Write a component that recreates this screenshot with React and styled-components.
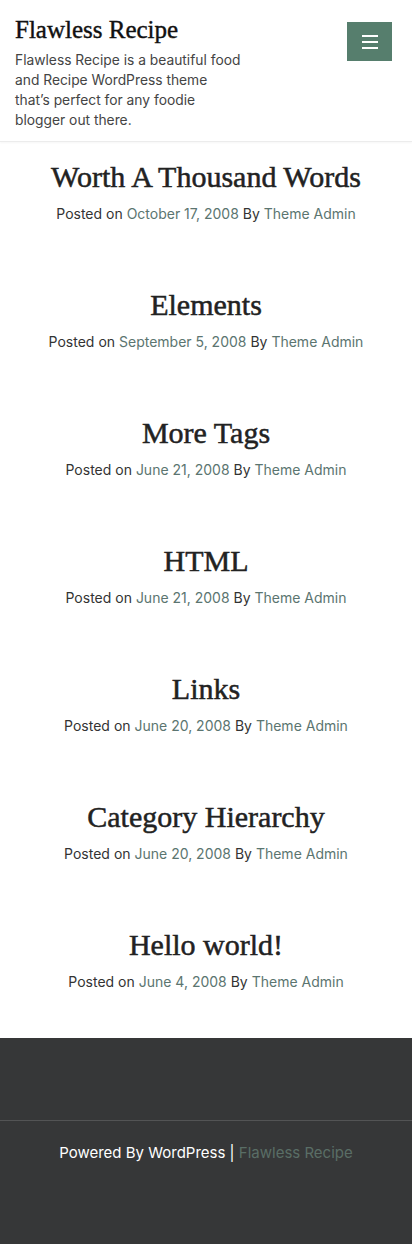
import React from "react";
import styled, { createGlobalStyle } from "styled-components";

const GlobalStyle = createGlobalStyle`
  html, body {
    margin: 0;
    padding: 0;
    background: #ffffff;
  }
  body {
    font-family: "Inter", "Liberation Sans", sans-serif;
  }
  * {
    box-sizing: border-box;
  }
`;

const Header = styled.header`
  display: flex;
  justify-content: space-between;
  align-items: flex-start;
  padding: 14px 20px 11px 15px;
  border-bottom: 1px solid #ececec;
  box-shadow: 0 1px 2px rgba(0, 0, 0, 0.04);
`;

const Branding = styled.div`
  display: flex;
  flex-direction: column;
  width: 229px;
`;

const SiteTitle = styled.a`
  font-family: "Liberation Serif", serif;
  font-size: 25px;
  line-height: 32px;
  font-weight: 400;
  -webkit-text-stroke: 0.4px #111;
  color: #111;
  text-decoration: none;
`;

const Tagline = styled.p`
  margin: 4px 0 0;
  font-size: 13.8px;
  line-height: 20px;
  color: #444;
`;

const MenuButton = styled.button`
  width: 45px;
  height: 39px;
  margin-top: 8px;
  border: none;
  background: #567e6d;
  display: flex;
  flex-direction: column;
  align-items: center;
  justify-content: center;
  gap: 4px;
  padding: 0;
  cursor: pointer;
`;

const Bar = styled.span`
  display: block;
  width: 16px;
  height: 2px;
  background: #fff;
`;

const Main = styled.main`
  display: flex;
  flex-direction: column;
  gap: 63px;
  padding: 17px 15px 46px;
`;

const Post = styled.article`
  display: flex;
  flex-direction: column;
  align-items: center;
  text-align: center;
`;

const PostTitle = styled.h2`
  margin: 0;
  font-family: "Liberation Serif", serif;
  font-size: 30px;
  line-height: 36px;
  font-weight: 400;
  -webkit-text-stroke: 0.5px #222;
  color: #222;
`;

const Meta = styled.div`
  margin-top: 9px;
  font-size: 14px;
  line-height: 20px;
  color: #333;
`;

const MetaLink = styled.a`
  color: #5b7570;
  text-decoration: none;
`;

const Footer = styled.footer`
  background: #363738;
  display: flex;
  flex-direction: column;
`;

const FooterTop = styled.div`
  height: 83px;
  border-bottom: 1px solid #535455;
`;

const SiteInfo = styled.div`
  padding: 22px 15px 81px;
  text-align: center;
  font-size: 15px;
  line-height: 20px;
  color: #fff;
`;

const FooterLink = styled.a`
  color: #5a6e66;
  text-decoration: none;
`;

const posts = [
  { title: "Worth A Thousand Words", date: "October 17, 2008" },
  { title: "Elements", date: "September 5, 2008" },
  { title: "More Tags", date: "June 21, 2008" },
  { title: "HTML", date: "June 21, 2008" },
  { title: "Links", date: "June 20, 2008" },
  { title: "Category Hierarchy", date: "June 20, 2008" },
  { title: "Hello world!", date: "June 4, 2008" },
];

export default function App() {
  return (
    <>
      <GlobalStyle />
      <Header>
        <Branding>
          <SiteTitle href="#">Flawless Recipe</SiteTitle>
          <Tagline>
            Flawless Recipe is a beautiful food and Recipe WordPress theme
            that’s perfect for any foodie blogger out there.
          </Tagline>
        </Branding>
        <MenuButton aria-label="Menu">
          <Bar />
          <Bar />
          <Bar />
        </MenuButton>
      </Header>
      <Main>
        {posts.map((p) => (
          <Post key={p.title}>
            <PostTitle>{p.title}</PostTitle>
            <Meta>
              Posted on <MetaLink href="#">{p.date}</MetaLink> By{" "}
              <MetaLink href="#">Theme Admin</MetaLink>
            </Meta>
          </Post>
        ))}
      </Main>
      <Footer>
        <FooterTop />
        <SiteInfo>
          Powered By WordPress | <FooterLink href="#">Flawless Recipe</FooterLink>
        </SiteInfo>
      </Footer>
    </>
  );
}
